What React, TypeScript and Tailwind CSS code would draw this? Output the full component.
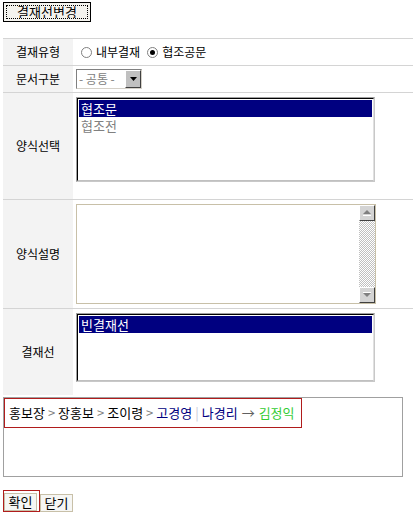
import React from "react";

const KR = { fontFamily: '"Noto Sans CJK KR", "Noto Sans", sans-serif' };

function Row({ label, h, children, last }: { label: string; h: string; children: React.ReactNode; last?: boolean }) {
  return (
    <div className={`flex ${h} ${last ? "" : "border-b border-[#d4d4d4]"}`}>
      <div className="w-[70px] shrink-0 bg-[#f3f3f3] flex items-center justify-center text-[12px] text-black">{label}</div>
      <div className="flex-1 flex items-center pl-[3px]">{children}</div>
    </div>
  );
}

function ListBox({ items, h }: { items: string[]; h: string }) {
  return (
    <div className={`w-[299px] ${h} border-t border-l border-[#a0a0a0] border-r border-b border-r-[#c8c8c8] border-b-[#c8c8c8]`}>
      <div className="w-full h-full border-t border-l border-t-black border-l-black border-r border-b border-r-[#e0e0e0] border-b-[#c0c0c0] bg-white p-[1px]">
        {items.map((it, i) => (
          <div
            key={it}
            className={`h-[17px] leading-[17px] text-[13px] pl-[2px] overflow-hidden ${i === 0 ? "bg-[#000080] text-white" : "text-[#808080]"}`}
          >
            {it}
          </div>
        ))}
      </div>
    </div>
  );
}

function Radio({ checked }: { checked?: boolean }) {
  return (
    <span className="inline-flex w-[11px] h-[11px] rounded-full border border-[#808080] bg-white items-center justify-center mr-[4px]">
      {checked && <span className="w-[5px] h-[5px] rounded-full bg-black" />}
    </span>
  );
}

export default function App() {
  return (
    <div className="w-[413px] h-[518px] bg-white relative overflow-hidden" style={KR}>
      <div className="pl-[3px] pt-[2px]">
        <div className="w-[88px] h-[20px] border border-black bg-[#f4f3ee] p-[2px] overflow-hidden">
          <div className="w-full h-full border border-dotted border-black flex justify-center overflow-hidden">
            <span className="text-[13px] leading-[13px] -mt-[1px] text-black">결재선변경</span>
          </div>
        </div>
      </div>

      <div className="ml-[3px] mt-[16px] border-t border-[#d4d4d4]">
        <Row label="결재유형" h="h-[27px]">
          <div className="flex items-center text-[12px] text-black pl-[5px]">
            <Radio />
            <span className="mr-[7px]">내부결재</span>
            <Radio checked />
            <span>협조공문</span>
          </div>
        </Row>
        <Row label="문서구분" h="h-[27px]">
          <div className="flex h-[20px] border border-t-[#808080] border-l-[#808080] border-b-[#d4d0c8] border-r-[#d4d0c8] bg-white">
            <span className="text-[12px] leading-[18px] text-[#808080] px-[2px] w-[48px]">- 공통 -</span>
            <div className="w-[16px] h-[18px] bg-[#c0c0c0] border border-t-white border-l-white border-b-[#404040] border-r-[#404040] flex items-center justify-center">
              <svg width="7" height="4" viewBox="0 0 7 4"><path d="M0 0H7L3.5 4Z" fill="#000" /></svg>
            </div>
          </div>
        </Row>
        <Row label="양식선택" h="h-[107px]">
          <div className="self-start mt-[4px]">
            <ListBox items={["협조문", "협조전"]} h="h-[85px]" />
          </div>
        </Row>
        <Row label="양식설명" h="h-[109px]">
          <div className="w-[300px] h-[100px] border border-[#c8c0a8] bg-white flex justify-end">
            <div className="w-[16px] h-full flex flex-col">
              <div className="h-[16px] bg-[#d4d4d4] border border-t-white border-l-white border-b-[#404040] border-r-[#404040] flex items-center justify-center">
                <svg width="8" height="6" viewBox="0 0 8 6"><path d="M0 4L4 0L8 4Z" fill="#808080" /><rect x="0" y="5" width="8" height="1" fill="#fff" /></svg>
              </div>
              <div className="flex-1 bg-[repeating-conic-gradient(#c0c0c0_0%_25%,#ffffff_0%_50%)] bg-[length:2px_2px]" />
              <div className="h-[16px] bg-[#d4d4d4] border border-t-white border-l-white border-b-[#404040] border-r-[#404040] flex items-center justify-center">
                <svg width="8" height="6" viewBox="0 0 8 6"><path d="M0 1L8 1L4 5Z" fill="#808080" /><rect x="0" y="0" width="8" height="1" fill="#fff" /></svg>
              </div>
            </div>
          </div>
        </Row>
        <Row label="결재선" h="h-[86px]" last>
          <div className="self-start mt-[4px]">
            <ListBox items={["빈결재선"]} h="h-[69px]" />
          </div>
        </Row>
      </div>

      <div className="ml-[3px] mt-[2px] w-[400px] h-[80px] border border-[#a0a0a0]">
        <div className="w-[298px] h-[30px] border border-[#b01c1c] flex items-center pl-[4px] text-[13px] whitespace-nowrap">
          <span className="text-black">홍보장</span>
          <span className="text-[#808080] mx-[3px]">&gt;</span>
          <span className="text-black">장홍보</span>
          <span className="text-[#808080] mx-[3px]">&gt;</span>
          <span className="text-black">조이령</span>
          <span className="text-[#808080] mx-[3px]">&gt;</span>
          <span className="text-[#000080]">고경영</span>
          <span className="text-[#c8c8d8] mx-[3px]">|</span>
          <span className="text-[#000080]">나경리</span>
          <span className="text-[#606060] mx-[4px]">→</span>
          <span className="text-[#33cc33]">김정익</span>
        </div>
      </div>

      <div className="flex items-end ml-[3px] mt-[13px]">
        <div className="w-[37px] h-[22px] border border-[#b01c1c] flex items-end">
          <div className="w-[33px] h-[18px] border border-[#c8c0a8] bg-[#f6f6f4] flex items-center justify-center text-[13px] text-black">확인</div>
        </div>
        <div className="w-[33px] h-[18px] border border-[#c8c0a8] bg-[#f6f6f4] flex items-center justify-center text-[13px] text-black">닫기</div>
      </div>
    </div>
  );
}
